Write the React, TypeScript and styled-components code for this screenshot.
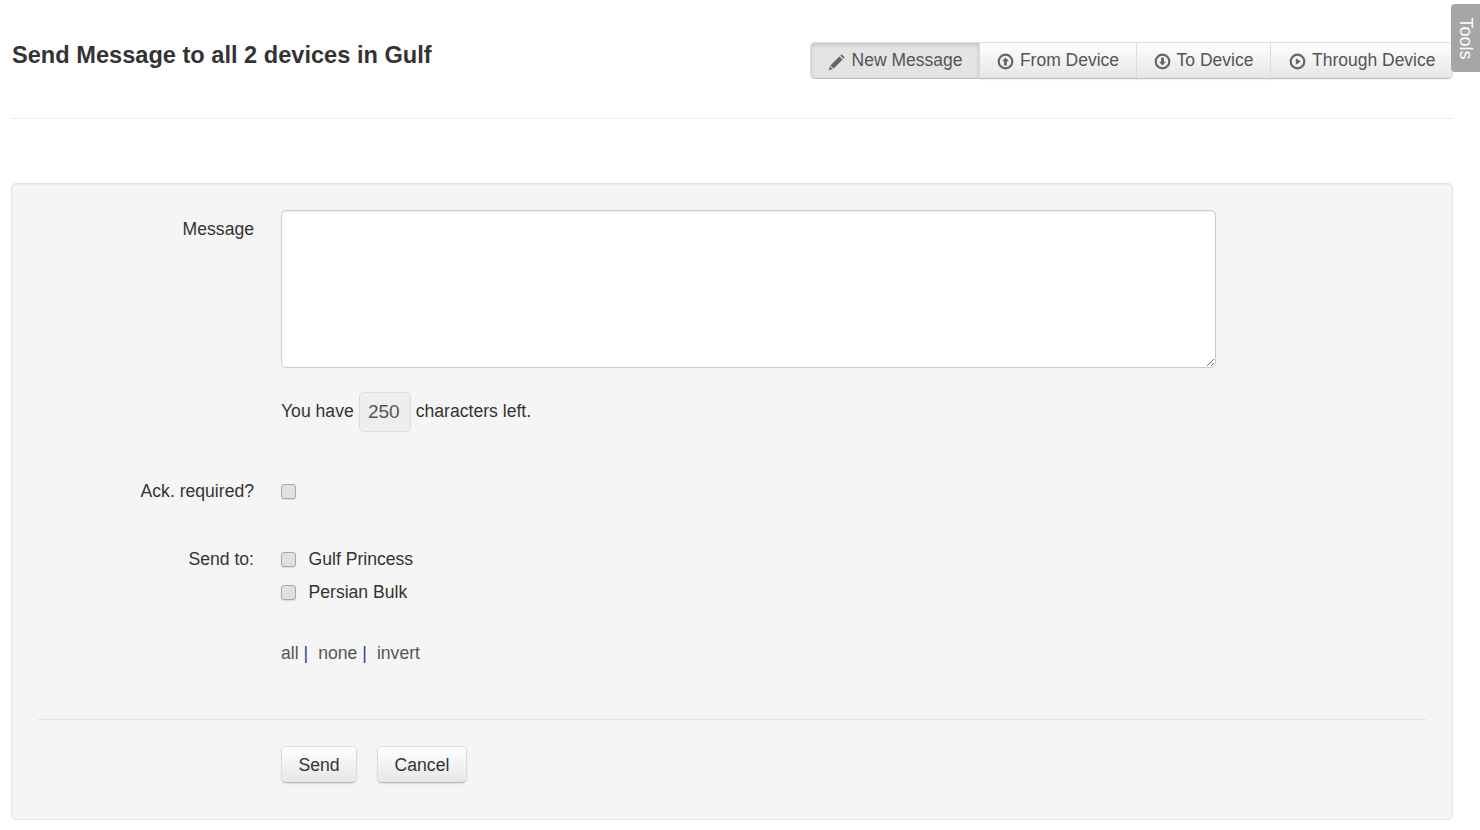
import React from 'react';
import styled, {createGlobalStyle} from 'styled-components';

const GlobalStyle = createGlobalStyle`
  html, body {
    margin: 0;
    padding: 0;
    background: #fff;
    color: #333;
    font-family: "Liberation Sans", Arial, sans-serif;
    font-size: 17.6px;
    line-height: 25px;
  }
`;

const Page = styled.div`
  position: relative;
  box-sizing: border-box;
  width: 1480px;
  height: 830px;
  overflow: hidden;
  padding: 0 27px 0 11px;
`;

const ToolsTab = styled.div`
  position: absolute;
  top: 4px;
  right: 0;
  width: 29px;
  height: 68px;
  box-sizing: border-box;
  background: #a6a6a6;
  border-radius: 4px 0 0 4px;
  color: #fff;
  font-size: 18px;
  display: flex;
  align-items: center;
  justify-content: center;
  span {
    display: block;
    transform: rotate(90deg);
    white-space: nowrap;
  }
`;

const Header = styled.header`
  display: flex;
  justify-content: space-between;
  align-items: flex-start;
  height: 118px;
  border-bottom: 1px solid #eee;
  margin-bottom: 64px;
`;

const Title = styled.h1`
  margin: 40px 0 0 1px;
  font-size: 23.6px;
  line-height: 30px;
  font-weight: bold;
  color: #333;
`;

const TabGroup = styled.div`
  display: flex;
  margin-top: 42px;
  height: 37px;
`;

const TabButton = styled.button<{$active?: boolean}>`
  display: flex;
  align-items: center;
  gap: 6px;
  height: 37px;
  padding: 0 16.5px 0 17px;
  margin: 0 0 0 -1px;
  border: 1px solid #ddd;
  border-bottom-color: #bbb;
  background: ${p => (p.$active ? '#e4e4e4' : 'linear-gradient(#fff, #e6e6e6)')};
  box-shadow: ${p =>
    p.$active ? 'inset 0 2px 4px rgba(0,0,0,0.15)' : '0 1px 1px rgba(0,0,0,0.05)'};
  color: #555;
  font: 17.5px "Liberation Sans", Arial, sans-serif;
  white-space: nowrap;
  &:first-child {
    margin-left: 0;
    border-radius: 5px 0 0 5px;
  }
  &:last-child {
    padding-left: 18px;
    border-radius: 0 5px 5px 0;
  }
  svg {
    flex: none;
    margin-top: 2px;
  }
`;

const Well = styled.form`
  box-sizing: border-box;
  height: 637px;
  padding: 26px 26px 0;
  background: #f5f5f5;
  border: 1px solid #e3e3e3;
  border-radius: 5px;
  box-shadow: inset 0 1px 1px rgba(0,0,0,0.05);
`;

const FormRow = styled.div<{$gap: number}>`
  display: grid;
  grid-template-columns: 216px 1fr;
  column-gap: 27px;
  margin-bottom: ${p => p.$gap}px;
`;

const Label = styled.label<{$top?: number}>`
  text-align: right;
  padding-top: ${p => p.$top ?? 0}px;
  color: #333;
`;

const MessageInput = styled.textarea`
  display: block;
  box-sizing: border-box;
  width: 935px;
  height: 158px;
  background: #fff;
  border: 1px solid #ccc;
  border-radius: 5px;
  box-shadow: inset 0 1px 1px rgba(0,0,0,0.07);
  outline: none;
`;

const Counter = styled.div`
  display: flex;
  align-items: center;
  gap: 5px;
  margin-top: -2px;
`;

const CountBox = styled.span`
  box-sizing: border-box;
  width: 52px;
  height: 40px;
  margin-top: 2px;
  padding: 0 2px 1px 0;
  display: flex;
  align-items: center;
  justify-content: center;
  background: #eee;
  border: 1px solid #ddd;
  border-radius: 5px;
  color: #555;
  font-size: 19px;
`;

const Check = styled.input.attrs({type: 'checkbox'})`
  appearance: none;
  display: block;
  box-sizing: border-box;
  flex: none;
  width: 15px;
  height: 15px;
  margin: 0;
  background: #e0e0e0;
  border: 1px solid #a8a8a8;
  border-radius: 3px;
  box-shadow: 0 1px 1px rgba(0,0,0,0.1);
`;

const CheckList = styled.div`
  display: flex;
  flex-direction: column;
  gap: 8px;
`;

const CheckItem = styled.label`
  display: flex;
  align-items: center;
  gap: 12.5px;
  color: #333;
`;

const Selectors = styled.div`
  margin-top: 36px;
  color: #2a3a9a;
`;

const SelectorLink = styled.a`
  color: #555;
  text-decoration: none;
  & + span {
    margin: 0 10px 0 5px;
  }
`;

const Divider = styled.hr`
  margin: 0 0 26px;
  border: 0;
  border-top: 1px solid #e3e3e3;
`;

const Actions = styled.div`
  display: flex;
  gap: 20px;
  margin-left: 243px;
`;

const ActionButton = styled.button`
  box-sizing: border-box;
  height: 37px;
  padding: 1px 16.5px 0;
  background: linear-gradient(#fff, #e6e6e6);
  border: 1px solid #ddd;
  border-bottom-color: #bbb;
  border-radius: 5px;
  box-shadow: 0 1px 2px rgba(0,0,0,0.1);
  color: #333;
  font: 17.6px "Liberation Sans", Arial, sans-serif;
`;

const PencilIcon = () => (
  <svg width="18" height="18" viewBox="0 0 18 18" aria-hidden="true">
    <path
      fill="#666"
      d="M13.6 1.2 16.8 4.4 15.4 5.8 12.2 2.6ZM11.4 3.4 14.6 6.6 5.6 15.6 2.4 12.4ZM1.9 13.2 4.8 16.1 0.8 17.2Z"
    />
  </svg>
);

const CircleIcon = ({children}: {children: React.ReactNode}) => (
  <svg width="17" height="17" viewBox="0 0 17 17" aria-hidden="true">
    <circle cx="8.5" cy="8.5" r="6.8" fill="none" stroke="#666" strokeWidth="2.2" />
    {children}
  </svg>
);

const ArrowUpIcon = () => (
  <CircleIcon>
    <path fill="#666" d="M8.5 4.4 12 8.2H9.9V12.4H7.1V8.2H5Z" />
  </CircleIcon>
);

const ArrowDownIcon = () => (
  <CircleIcon>
    <path fill="#666" d="M8.5 12.6 5 8.8H7.1V4.6H9.9V8.8H12Z" />
  </CircleIcon>
);

const PlayIcon = () => (
  <CircleIcon>
    <path fill="#666" d="M6.8 5.2 11.8 8.5 6.8 11.8Z" />
  </CircleIcon>
);

export default function App() {
  return (
    <Page>
      <GlobalStyle />
      <ToolsTab>
        <span>Tools</span>
      </ToolsTab>
      <Header>
        <Title>Send Message to all 2 devices in Gulf</Title>
        <TabGroup>
          <TabButton type="button" $active>
            <PencilIcon />
            New Message
          </TabButton>
          <TabButton type="button">
            <ArrowUpIcon />
            From Device
          </TabButton>
          <TabButton type="button">
            <ArrowDownIcon />
            To Device
          </TabButton>
          <TabButton type="button">
            <PlayIcon />
            Through Device
          </TabButton>
        </TabGroup>
      </Header>
      <Well>
        <FormRow $gap={24}>
          <Label $top={7}>Message</Label>
          <MessageInput />
        </FormRow>
        <FormRow $gap={47}>
          <span />
          <Counter>
            You have <CountBox>250</CountBox> characters left.
          </Counter>
        </FormRow>
        <FormRow $gap={43}>
          <Label>Ack. required?</Label>
          <CheckItem>
            <Check />
          </CheckItem>
        </FormRow>
        <FormRow $gap={53}>
          <Label>Send to:</Label>
          <div>
            <CheckList>
              <CheckItem>
                <Check />
                Gulf Princess
              </CheckItem>
              <CheckItem>
                <Check />
                Persian Bulk
              </CheckItem>
            </CheckList>
            <Selectors>
              <SelectorLink>all</SelectorLink>
              <span>|</span>
              <SelectorLink>none</SelectorLink>
              <span>|</span>
              <SelectorLink>invert</SelectorLink>
            </Selectors>
          </div>
        </FormRow>
        <Divider />
        <Actions>
          <ActionButton type="button">Send</ActionButton>
          <ActionButton type="button">Cancel</ActionButton>
        </Actions>
      </Well>
    </Page>
  );
}
